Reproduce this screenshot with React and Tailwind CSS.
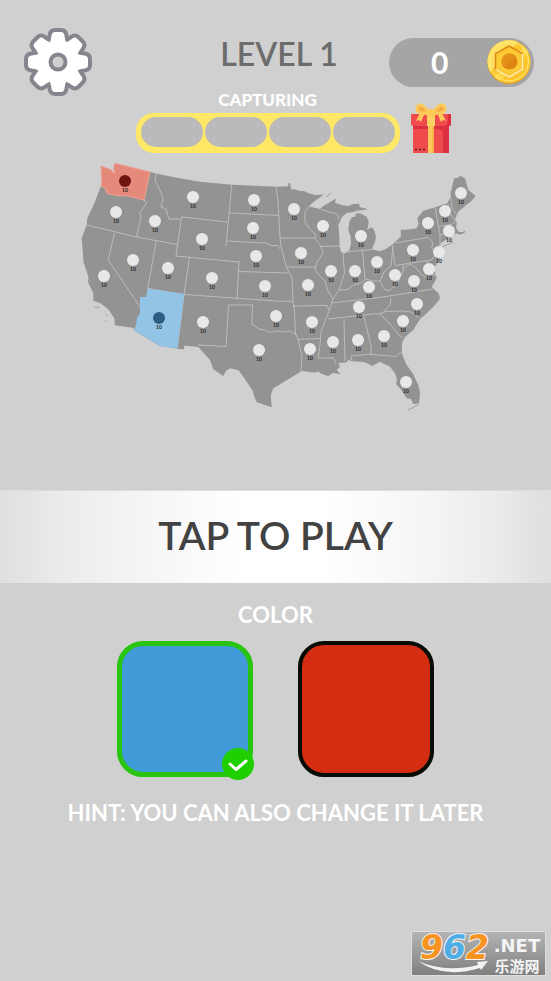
import React, { useState } from 'react';

const LAND =
  'M101 166L111.7 170L112.7 172.5L115 173L113.7 169L114.7 163.3L150 172L156 173.5L178 178L200 181.7L231.7 184.7L276 186.7L288.3 186.3V183.3L290 183L291 189.3L295 189.5L300 191L304 191L308 193L315 195L324 194.5L315 200.7L308.5 206.5L315 207.7L320 209L324 205.5L328.3 203.3L333.3 200L336 199L335 202.7L341.7 205L348.3 206L353 204L359 203.8L360 207.3L366 208.5L365 210L358 210.5L353 212L346.7 213L342 217L338.3 225.5L339.3 235L339.5 246L341 252L345 253.5L349.5 250L351 243L350.5 236L348.3 230L349.3 221.7L352 217L355 217L356 213.5L360 213.3L366.7 216.7L368.7 221.7L368 227L366.7 230L372 227.3L374.5 231L376 236.7L375 241.7L371.7 249.3L380 251.3L386 249L391.7 245L396 241L401 236.5L400.7 230L408 229.5L416.7 228.3L418.5 224L417.3 218.3L423.3 210.7L435 207.3L447.3 203.3L450 198.3L451 191.7L452.5 185L454 178.3L457 178L460.7 176L465 178.3L468.3 190L475.7 196L471.7 200.7L465 206L458.3 211.7L455 219.3L456.7 223.3L456 228L459 232L464 232L463 229.5L465.5 232L461 234.5L456 233.5L450 237L441 243L438.5 248L441 252L440 258L436 265L433 268L435 273L436.7 278L433.3 284L431.7 286.7L435 290L438.3 293.3L439.3 300L433.3 306.7L426.7 313.3L420 319L413.3 330L405 337L402 343L401.7 353.3L406.7 365L412.7 373.3L418.3 385L420 393.3L419 403L413.3 404.3L411 399L406.7 398.3L400 388.3L396 384L397 380L395 373.3L390 366.7L380 361.7L372.3 366L365 362.3L350 361L349 359.5L346 362.5L338.3 363L340 367L336.7 370L340.7 374.3L333 373L328.3 376L322 374L318.3 371.7L314 372.5L301.7 371L290 378.3L273.3 388.3L270.7 395L271.7 407.3L256.7 402.3L254 396L252.7 390.7L243.3 376.7L238.3 370L230 368.3L226 371L223.3 376L213.3 369.3L210 360L198.3 347L184.3 345.7L184 349.3L177.3 348.7L160 346L133.3 330L134 328L115 325.3L114.3 318.3L108.3 309.3L100 303L93.3 300.7L93.3 293.3L88 282L88.5 277L83.5 262L83 254L81.7 238.3L86.7 225L87.3 218.3L94 204L101 186L102 181Z';

const WASHINGTON =
  'M101 166L111.7 170L112.7 172.5L115 173L113.7 169L114.7 163.3L150 172L144 200L128 196L117 195.5L107 193.5L105 188L101 186L102 181Z';
const ARIZONA = 'M147.7 288.5L184.3 294L177.3 348.7L160 346L133.8 330L136 325L137 318L140 313L140 297L146 297Z';

const BORDERS = [
  'M156 173.5L155 181L161 192L163 199L161 207L166 209L169 219L180 219',
  'M231.7 184.7L226 246',
  'M144 200L146.5 203L140 213L141 217L136.5 237',
  'M86.5 225L136.5 237L177 244.5',
  'M181.5 217L228 222M181.5 217L176 256L239 262',
  'M114.5 233L108.3 260L140 307',
  'M156 242L147.7 288.5L184 294.5L280 301.3',
  'M189.5 257L184 294.5L177.3 348.7',
  'M239 261L237 299',
  'M239 271.5L287.5 273',
  'M230 213L278.5 215.5',
  'M276 186.7L278 201L279 219L280 238L281 246L286 266L292 278L293 301L294.5 312L295.5 334L298 339L302 356L301 371',
  'M227.5 241L266 243L271 245.5L278 245.5L280 249',
  'M280 238H314.5L321 246.5L323 252L320 258L317 262L315 270L319 275L325 281L328 291L333 299',
  'M308.5 206.5L305 212L305 222L309 228L315 234L316 238',
  'M321 209.5L337 214L339 219',
  'M320 246.5L340 246',
  'M286 267H314L316 266',
  'M293 306L327 305.5L329 310',
  'M343 253L344.5 273L341 284L339 290L333 299L331 306L325 321L321 332L320 345L318 358H333.5L336 364',
  'M229 305H252.5L252 324L259 329L265 330L270 332.5L277 331L284 332L290 331L297 335',
  'M228.5 304.5L226 346.5L198 345',
  'M280 301.3L293 301.3',
  'M298 339.5L321 338.5',
  'M345 252L372 249.5M362.5 251L365 279',
  'M339 290L347 289.5L354 285L361 283L366 279L373 281L380 281L384 272L391 266L393 246',
  'M332 303L383 297L433 289',
  'M328 319L373 314L382 313.5L390 305L391 298',
  'M344 319L345 361',
  'M364 317L371 346L371 354L351 356L352 361',
  'M371 354.5L396 356.5L401 352',
  'M380 314L386 311.5L402 311L411 312L419 318',
  'M380 314L390 324L399 335L403 338',
  'M395 243L428 237.5L433 243L431.5 248L437 254L431 260L395 265.5L392 244',
  'M403 265L403 271L397 284L389 291L384 289L380 281',
  'M403 269L410 264L416 268L422 275L431 279',
  'M427 261L430 274L435 275',
  'M435 207.5L438 224L440 235L440 246',
  'M448 203.3L449 212L455 221',
  'M439 226.5L451 224.5L457 221',
  'M440 235L453 231L455 235',
  'M450 191L452 208L457 215',
];

const OWNED = {
  WA: '#6e1411',
  AZ: '#2b5e82',
};

const STATES = [
  ['WA', 125, 181], ['OR', 116, 212], ['ID', 155, 221], ['MT', 193, 197], ['WY', 202, 239],
  ['NV', 133, 260], ['UT', 168, 268], ['CO', 212, 278], ['CA', 104, 276], ['AZ', 159, 318],
  ['NM', 203, 322], ['ND', 254, 200], ['SD', 253, 228], ['NE', 256, 256], ['KS', 265, 286],
  ['OK', 276, 316], ['TX', 259, 350], ['MN', 294, 209], ['IA', 301, 253], ['MO', 308, 285],
  ['AR', 312, 322], ['LA', 310, 349], ['WI', 323, 226], ['IL', 331, 271], ['IN', 355, 271],
  ['MI', 361, 236], ['OH', 377, 262], ['KY', 369, 287], ['TN', 359, 307], ['MS', 333, 342],
  ['AL', 358, 340], ['GA', 384, 336], ['FL', 406, 382], ['SC', 403, 321], ['NC', 417, 304],
  ['VA', 414, 281], ['WV', 395, 275], ['PA', 413, 250], ['NY', 428, 223], ['NH', 445, 211],
  ['ME', 461, 193], ['MA', 449, 231], ['NJ', 439, 252], ['MD', 429, 269],
];

const GEAR_ANGLES = [0, 45, 90, 135, 180, 225, 270, 315];
const GEAR_TOOTH = 'M-9.5 -18Q-7.5 -20 -7 -23L-6.5 -26.5Q-6 -30 -3 -30H3Q6 -30 6.5 -26.5L7 -23Q7.5 -20 9.5 -18Z';

const GearIcon = () => (
  <svg className="size-[68px]" viewBox="-34 -34 68 68" aria-hidden="true">
    {/* outline first, white body on top */}
    <g fill="#85868d" stroke="#85868d" strokeWidth="8" strokeLinejoin="round">
      <circle r="20" />
      {GEAR_ANGLES.map((angle) => (
        <path key={angle} d={GEAR_TOOTH} transform={`rotate(${angle})`} />
      ))}
    </g>
    <g fill="#fff">
      <circle r="20.5" />
      {GEAR_ANGLES.map((angle) => (
        <path key={angle} d={GEAR_TOOTH} transform={`rotate(${angle})`} />
      ))}
    </g>
    <circle r="7.5" fill="#cfcfcf" stroke="#85868d" strokeWidth="4" />
  </svg>
);

const CoinIcon = () => (
  <svg className="size-11" viewBox="0 0 44 44" aria-hidden="true">
    <circle cx="22" cy="22.5" r="21.5" fill="#e09a1c" />
    <circle cx="22" cy="21.5" r="21.5" fill="#fdc52c" />
    <path d="M3 31.5A21.5 21.5 0 0 1 31 2Z" fill="#ffe063" />
    <path d="M7 36.5L37 6.5L41.5 12.5L13 41Z" fill="#ffd84a" />
    <circle cx="22" cy="21.5" r="19.5" fill="none" stroke="#ffec80" strokeWidth="1" />
    <path d="M22 6L35.5 13.7V29.3L22 37L8.5 29.3V13.7Z" fill="#fdc832" stroke="#dc8b14" strokeWidth="1.5" strokeLinejoin="round" />
    <path d="M35.5 14V29.3L22 37L8.5 29.3" fill="none" stroke="#fff4b0" strokeWidth="1.5" strokeLinejoin="round" />
    <path d="M22 9L32.5 15V28L22 34L11.5 28V15Z" fill="#fccb38" />
    <circle cx="22.5" cy="21.5" r="8" fill="#de8611" />
    <path d="M16.8 27.2A8 8 0 0 1 28.2 15.8Z" fill="#e4901a" />
  </svg>
);

const GiftIcon = () => (
  <svg className="h-[50px] w-[42px]" viewBox="0 0 42 50" aria-hidden="true">
    <path d="M3 20H39V50H3Z" fill="#f04b4c" />
    <path d="M3 22H39V50H33V31Q33 27 28 26H3Z" fill="#dc3042" />
    <path d="M1.5 11H39.5Q41 11 41 12.5V21Q41 23 39 23H3Q1 23 1 21V12.5Q1 11 1.5 11Z" fill="#f04b4c" />
    <path d="M38 11H41V21Q41 23 39 23H35Q38 22 38 18Z" fill="#dc3042" />
    <path d="M18 22H24V50H18Z" fill="#fdc95a" />
    <path d="M22.5 24H24V50H22.5Z" fill="#f6ae3d" />
    <path d="M17 10H25V23H17Z" fill="#fdd263" />
    <path d="M17 9L10 10L6 18L9 17L11 19L14 12L18 11ZM25 9L32 10L36 18L33 17L31 19L28 12L24 11Z" fill="#fdc95a" />
    <path d="M18 10C14 10 7 11 7 6Q7 2 11 2C14 2 15 6 18 8M24 10C28 10 35 11 35 6Q35 2 31 2C28 2 27 6 24 8" fill="#f5ad43" stroke="#fdc95a" strokeWidth="3" />
    <rect x="16" y="6" width="10" height="8" rx="4" fill="#fdc95a" />
    <path d="M5 46.5H7M9 46.5H11M13 46.5H15" stroke="#5b1c22" strokeWidth="1.5" />
  </svg>
);

const CampaignMap = () => (
  <svg className="h-auto w-[405px] max-w-full" viewBox="73 160 405 252" role="img" aria-label="Campaign map">
    <path d={LAND} fill="#939393" />
    <path
      d="M326 197L331 193M94.5 307L100 307.5M106 314L107 316M105 320L106 321M442 247L453 242M408 410L414 407L419 404M438 293L440 298L435 304M367 209.5L363 209"
      fill="none"
      stroke="#a0a0a0"
      strokeWidth="1"
    />
    <path d={BORDERS.join('')} fill="none" stroke="#bcbcbc" strokeWidth="1" strokeLinejoin="round" />
    <path d={WASHINGTON} fill="#e58a7b" stroke="#efa092" strokeWidth="1" />
    <path d={ARIZONA} fill="#93c4e5" />
    {STATES.map(([id, x, y]) => (
      <g key={id}>
        <circle cx={x} cy={y} r="6" fill={OWNED[id] || '#e8e8e8'} />
        <text x={x} y={y + 11} textAnchor="middle" fill="#262626" className="text-[5px] font-bold">
          10
        </text>
      </g>
    ))}
  </svg>
);

const ColorOption = ({ name, label, selected, onSelect, swatchClass }) => (
  <div className="relative size-[136px]">
    <input
      type="radio"
      name="color"
      value={name}
      aria-label={label}
      checked={selected}
      onChange={() => onSelect(name)}
      className={`block size-full cursor-pointer appearance-none rounded-[26px] ${swatchClass} ${
        selected ? 'border-5 border-[#28c410]' : 'border-4 border-[#040c04]'
      }`}
    />
    {selected && (
      <span className="pointer-events-none absolute -right-px -bottom-[3px] flex size-8 items-center justify-center rounded-full bg-[#20cf00]">
        <svg className="size-5" viewBox="0 0 20 20" fill="none" stroke="#fff" strokeWidth="3" strokeLinecap="round" strokeLinejoin="round" aria-hidden="true">
          <path d="M2 10L8 15.5L18 7" />
        </svg>
      </span>
    )}
  </div>
);

const SiteBadge = () => (
  <div className="relative flex h-[45px] w-[135px] border border-[#dedede] bg-linear-to-b from-[#b4b4b4] to-[#808080] pl-2">
    <span className="font-['DejaVu_Sans'] text-[33px] leading-8 font-bold italic [-webkit-text-stroke:2px_#f4f4f4] [paint-order:stroke_fill]">
      <span className="text-[#f7931e]">9</span>
      <span className="text-[#50aee6]">6</span>
      <span className="text-[#f7931e]">2</span>
    </span>
    <span className="flex flex-1 flex-col items-center text-[#f4f4f4]">
      <span className="pt-0.5 font-['DejaVu_Sans'] text-[18px] leading-6 font-bold">.NET</span>
      <span className="font-['Noto_Sans_CJK_SC',sans-serif] text-[15px] leading-4 font-bold">乐游网</span>
    </span>
    <svg className="absolute bottom-0.5 left-1.5 h-3 w-[70px]" viewBox="0 0 70 12" aria-hidden="true">
      <path d="M0 0Q26 12 60 4L59 1L70 0L63 9L62 7Q25 18 0 0Z" fill="#f2f2f2" />
    </svg>
  </div>
);

const App = () => {
  const [color, setColor] = useState('blue');

  return (
    <main className="flex min-h-screen flex-col items-center bg-[#d0d0d0] font-['Lato',sans-serif] text-white">
      <header className="grid w-full grid-cols-[1fr_auto_1fr] items-center pt-7 pr-[17px] pl-6">
        <button type="button" aria-label="Settings" className="justify-self-start">
          <GearIcon />
        </button>
        <h1 className="self-start text-[32px] leading-[52px] font-semibold text-[#6c6c6c]">LEVEL 1</h1>
        <div className="flex h-[49px] w-[145px] items-center justify-between justify-self-end rounded-full bg-[#a5a5a5] pr-[3px] pl-[42px]">
          <span className="text-[30px] leading-8 font-bold">0</span>
          <CoinIcon />
        </div>
      </header>

      <section className="-mt-1 ml-9 grid grid-cols-[264px_42px] gap-x-[10px]">
        <h2 className="text-center text-[17px] leading-4 font-black">CAPTURING</h2>
        <div className="col-start-2 row-span-2 row-start-1 self-end">
          <GiftIcon />
        </div>
        <div className="mt-[5px] grid h-10 grid-cols-4 gap-0.5 rounded-[18px] bg-[#ffe866] px-[5px] pt-1 pb-1.5">
          <span className="rounded-2xl bg-[#bababa]" />
          <span className="rounded-2xl bg-[#bababa]" />
          <span className="rounded-2xl bg-[#bababa]" />
          <span className="rounded-2xl bg-[#bababa]" />
        </div>
      </section>

      <div className="mt-[7px] flex w-full justify-center">
        <CampaignMap />
      </div>

      <button
        type="button"
        className="mt-[78px] h-[93px] w-full border-t border-[#dddddd] bg-[linear-gradient(to_right,#dfdfdf,#ececec_12%,#f5f5f5_26%,#ffffff_44%,#ffffff_58%,#f5f5f5_78%,#ebebeb_90%,#dedede)] pb-1 text-[39px] leading-10 font-semibold text-[#424242]"
      >
        TAP TO PLAY
      </button>

      <h2 className="mt-4 text-[22px] leading-8 font-bold" id="color-title">
        COLOR
      </h2>
      <div role="radiogroup" aria-labelledby="color-title" className="mt-[10px] flex gap-[45px]">
        <ColorOption name="blue" label="Blue" selected={color === 'blue'} onSelect={setColor} swatchClass="bg-[#409bd8]" />
        <ColorOption name="red" label="Red" selected={color === 'red'} onSelect={setColor} swatchClass="bg-[#d42d12]" />
      </div>
      <p className="mt-5 text-center text-[22px] leading-8 font-bold">HINT: YOU CAN ALSO CHANGE IT LATER</p>

      <footer className="mt-auto self-end pr-[5px] pb-[5px]">
        <SiteBadge />
      </footer>
    </main>
  );
};

export default App;
